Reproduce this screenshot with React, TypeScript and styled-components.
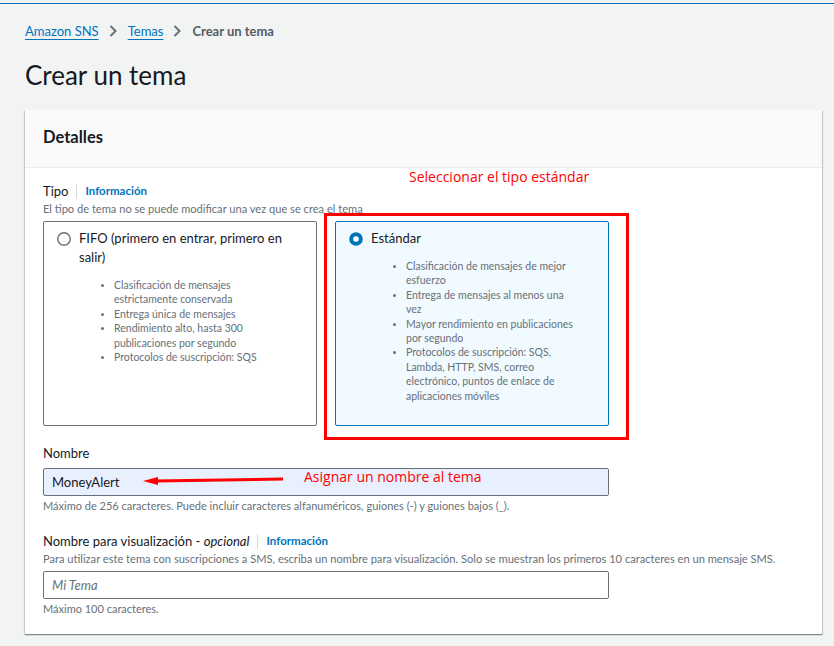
import React from "react";
import styled, { createGlobalStyle } from "styled-components";

const GlobalStyle = createGlobalStyle`
  * { box-sizing: border-box; }
  html, body { margin: 0; padding: 0; background: #f2f3f3; }
  body {
    font-family: Lato, "Liberation Sans", Arial, sans-serif;
    color: #16191f;
  }
`;

const Page = styled.div`
  margin-top: 3px;
  border-top: 1px solid #0073bb;
  height: 643px;
  padding: 18px 12px 0 25px;
  overflow: hidden;
`;

const Breadcrumbs = styled.nav`
  display: flex;
  align-items: center;
  height: 18px;
  font-size: 13px;
  line-height: 18px;
`;

const Crumb = styled.a`
  color: #0073bb;
  text-decoration: underline;
  text-underline-offset: 3px;
  cursor: pointer;
`;

const CurrentCrumb = styled.span`
  color: #545b64;
  font-weight: 700;
`;

const ChevronWrap = styled.span`
  display: flex;
  margin: 0 11px 0 10px;
`;

const Chevron = () => (
  <ChevronWrap>
    <svg width="8" height="12" viewBox="0 0 8 12">
      <path d="M1.5 1 L6.5 6 L1.5 11" fill="none" stroke="#687078" strokeWidth="2" />
    </svg>
  </ChevronWrap>
);

const Title = styled.h1`
  margin: 20px 0 0;
  font-size: 26px;
  line-height: 30px;
  font-weight: 400;
  color: #16191f;
`;

const Panel = styled.section`
  margin-top: 20px;
  width: 797px;
  background: #fff;
  box-shadow: 0 1px 1px 0 rgba(0, 28, 36, 0.3), 1px 1px 1px 0 rgba(0, 28, 36, 0.15),
    -1px 1px 1px 0 rgba(0, 28, 36, 0.15);
`;

const PanelHeader = styled.header`
  height: 58px;
  background: #fafafa;
  border-bottom: 1px solid #eaeded;
  display: flex;
  align-items: center;
  padding: 0 18px 4px;
`;

const PanelTitle = styled.h2`
  margin: 0;
  font-size: 16.5px;
  font-weight: 700;
  color: #16191f;
`;

const PanelBody = styled.div`
  padding: 14px 18px 17px;
`;

const Form = styled.div`
  display: flex;
  flex-direction: column;
`;

const Field = styled.div`
  display: flex;
  flex-direction: column;
  & + & {
    margin-top: 18px;
  }
`;

const LabelRow = styled.div`
  display: flex;
  align-items: center;
  font-size: 13px;
  line-height: 18px;
  color: #16191f;
`;

const InfoSep = styled.span`
  width: 1px;
  height: 15px;
  background: #d5dbdb;
  margin: 0 8px 0 8px;
`;

const InfoLink = styled.a`
  font-size: 11.5px;
  font-weight: 700;
  color: #0073bb;
  cursor: pointer;
`;

const Desc = styled.div`
  margin-top: 1px;
  font-size: 11.1px;
  line-height: 16px;
  color: #687078;
`;

const Hint = styled.div`
  margin-top: 2px;
  font-size: 11px;
  line-height: 16px;
  color: #687078;
`;

const TileGrid = styled.div`
  position: relative;
  width: 566px;
  display: grid;
  grid-template-columns: 1fr 1fr;
  gap: 18px;
  margin-top: 4px;
`;

const Tile = styled.div<{ $selected?: boolean }>`
  height: 205px;
  border: 1px solid ${(p) => (p.$selected ? "#0073bb" : "#687078")};
  background: ${(p) => (p.$selected ? "#f1faff" : "#ffffff")};
  border-radius: 2px;
  padding: 7px 20px 0 13px;
`;

const TileHead = styled.div`
  display: flex;
  align-items: flex-start;
  gap: 8px;
  font-size: 13px;
  line-height: 19px;
  color: #16191f;
`;

const RadioBox = styled.span`
  flex: none;
  height: 19px;
  display: flex;
  align-items: center;
`;

const Radio = ({ checked }: { checked?: boolean }) => (
  <RadioBox>
    {checked ? (
      <svg width="14" height="14" viewBox="0 0 14 14">
        <circle cx="7" cy="7" r="4.8" fill="#ffffff" stroke="#0073bb" strokeWidth="4" />
      </svg>
    ) : (
      <svg width="14" height="14" viewBox="0 0 14 14">
        <circle cx="7" cy="7" r="6.2" fill="#ffffff" stroke="#687078" strokeWidth="1.4" />
      </svg>
    )}
  </RadioBox>
);

const BulletList = styled.ul`
  margin: 11px 0 0;
  padding-left: 57px;
  font-size: 10.5px;
  line-height: 14.4px;
  color: #687078;
  list-style: disc;
  li::marker {
    font-size: 9px;
  }
`;

const Highlight = styled.div`
  position: absolute;
  left: 281px;
  top: -8px;
  width: 305px;
  height: 227px;
  border: 3px solid #ff0000;
  pointer-events: none;
`;

const Note = styled.span<{ $left: number; $top: number }>`
  position: absolute;
  left: ${(p) => p.$left}px;
  top: ${(p) => p.$top}px;
  font-family: "Open Sans", "Liberation Sans", sans-serif;
  font-size: 14px;
  line-height: 18px;
  color: #ff0000;
  white-space: nowrap;
  pointer-events: none;
`;

const InputWrap = styled.div<{ $gap: number }>`
  position: relative;
  width: 566px;
  margin-top: ${(p) => p.$gap}px;
`;

const TextInput = styled.input<{ $filled?: boolean }>`
  display: block;
  width: 566px;
  height: 28px;
  border: 1px solid #687078;
  border-radius: 2px;
  padding: 0 8px;
  font-family: inherit;
  font-size: 13px;
  color: #16191f;
  background: ${(p) => (p.$filled ? "#e8f0fe" : "#ffffff")};
  outline: none;
  &::placeholder {
    font-style: italic;
    color: #687078;
  }
`;

const ArrowSvg = styled.svg`
  position: absolute;
  left: 96px;
  top: 4px;
  pointer-events: none;
`;

export default function App() {
  return (
    <>
      <GlobalStyle />
      <Page>
        <Breadcrumbs>
          <Crumb>Amazon SNS</Crumb>
          <Chevron />
          <Crumb>Temas</Crumb>
          <Chevron />
          <CurrentCrumb>Crear un tema</CurrentCrumb>
        </Breadcrumbs>
        <Title>Crear un tema</Title>
        <Panel>
          <PanelHeader>
            <PanelTitle>Detalles</PanelTitle>
          </PanelHeader>
          <PanelBody>
            <Form>
              <Field>
                <LabelRow>
                  Tipo
                  <InfoSep />
                  <InfoLink>Información</InfoLink>
                </LabelRow>
                <Desc>El tipo de tema no se puede modificar una vez que se crea el tema</Desc>
                <TileGrid>
                  <Tile>
                    <TileHead>
                      <Radio />
                      <span>FIFO (primero en entrar, primero en salir)</span>
                    </TileHead>
                    <BulletList>
                      <li>Clasificación de mensajes estrictamente conservada</li>
                      <li>Entrega única de mensajes</li>
                      <li>Rendimiento alto, hasta 300 publicaciones por segundo</li>
                      <li>Protocolos de suscripción: SQS</li>
                    </BulletList>
                  </Tile>
                  <Tile $selected>
                    <TileHead>
                      <Radio checked />
                      <span>Estándar</span>
                    </TileHead>
                    <BulletList>
                      <li>Clasificación de mensajes de mejor esfuerzo</li>
                      <li>
                        Entrega de mensajes al menos una
                        <br />
                        vez
                      </li>
                      <li>Mayor rendimiento en publicaciones por segundo</li>
                      <li>
                        Protocolos de suscripción: SQS, Lambda, HTTP, SMS, correo electrónico, puntos de
                        enlace de aplicaciones móviles
                      </li>
                    </BulletList>
                  </Tile>
                  <Highlight />
                  <Note $left={366} $top={-53}>
                    Seleccionar el tipo estándar
                  </Note>
                </TileGrid>
              </Field>
              <Field>
                <LabelRow>Nombre</LabelRow>
                <InputWrap $gap={6}>
                  <TextInput $filled defaultValue="MoneyAlert" />
                  <ArrowSvg width="148" height="14" viewBox="0 0 148 14">
                    <line x1="16" y1="9" x2="144" y2="7" stroke="#ff0000" strokeWidth="3" />
                    <polygon points="4,9 19,5 19,13" fill="#ff0000" />
                  </ArrowSvg>
                  <Note $left={261} $top={0}>
                    Asignar un nombre al tema
                  </Note>
                </InputWrap>
                <Hint>
                  Máximo de 256 caracteres. Puede incluir caracteres alfanuméricos, guiones (-) y guiones bajos (_).
                </Hint>
              </Field>
              <Field>
                <LabelRow>
                  Nombre para visualización -&nbsp;<em>opcional</em>
                  <InfoSep />
                  <InfoLink>Información</InfoLink>
                </LabelRow>
                <Desc>
                  Para utilizar este tema con suscripciones a SMS, escriba un nombre para visualización. Solo se
                  muestran los primeros 10 caracteres en un mensaje SMS.
                </Desc>
                <InputWrap $gap={4}>
                  <TextInput placeholder="Mi Tema" />
                </InputWrap>
                <Hint>Máximo 100 caracteres.</Hint>
              </Field>
            </Form>
          </PanelBody>
        </Panel>
      </Page>
    </>
  );
}
